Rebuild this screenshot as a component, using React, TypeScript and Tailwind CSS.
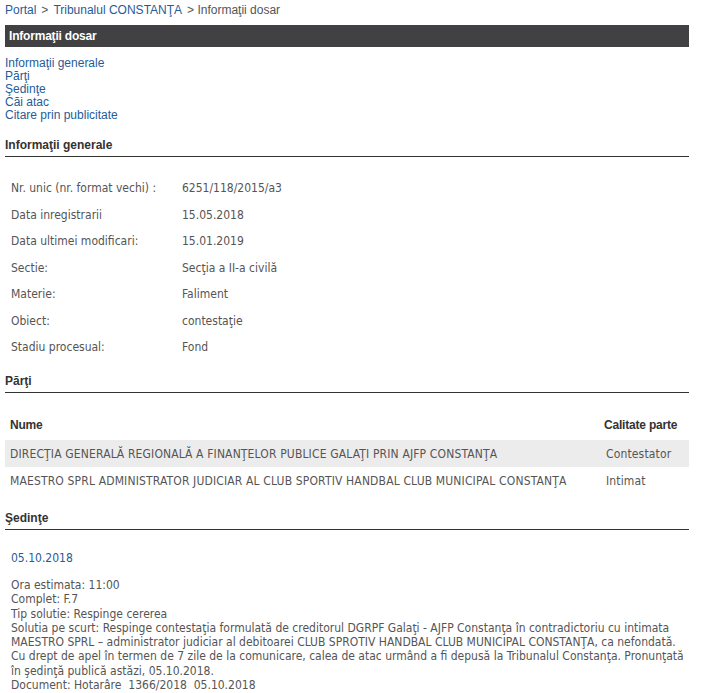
const sans = "font-['Liberation_Sans',Arial,sans-serif]";
const body = "font-['DejaVu_Sans_Condensed','DejaVu_Sans',sans-serif]";

const info: [string, string][] = [
  ["Nr. unic (nr. format vechi) :", "6251/118/2015/a3"],
  ["Data inregistrarii", "15.05.2018"],
  ["Data ultimei modificari:", "15.01.2019"],
  ["Sectie:", "Secţia a II-a civilă"],
  ["Materie:", "Faliment"],
  ["Obiect:", "contestaţie"],
  ["Stadiu procesual:", "Fond"],
];

const parti: [string, string][] = [
  ["DIRECŢIA GENERALĂ REGIONALĂ A FINANŢELOR PUBLICE GALAŢI PRIN AJFP CONSTANŢA", "Contestator"],
  ["MAESTRO SPRL ADMINISTRATOR JUDICIAR AL CLUB SPORTIV HANDBAL CLUB MUNICIPAL CONSTANŢA", "Intimat"],
];

function SectionTitle({ children }: { children: React.ReactNode }) {
  return (
    <div className={`${sans} text-[12px] font-bold text-[#333] leading-[14px] pb-[4px] border-b border-[#333]`}>
      {children}
    </div>
  );
}

export default function App() {
  return (
    <div className="bg-white w-[713px] h-[693px] overflow-hidden pl-[5px] pr-[24px] pt-[3px]">
      {/* breadcrumb */}
      <div className={`${sans} text-[12px] leading-[14px] text-[#555] flex gap-[5px]`}>
        <a className="text-[#1f5c99]">Portal</a>
        <span>&gt;</span>
        <a className="text-[#1f5c99]">Tribunalul CONSTANŢA</a>
        <span>&gt; Informaţii dosar</span>
      </div>

      <div className={`${sans} mt-[8px] h-[22px] bg-[#414042] text-white text-[12px] font-bold leading-[22px] px-[4px] tracking-[-0.2px]`}>
        Informaţii dosar
      </div>

      {/* anchors */}
      <div className={`${sans} mt-[10px] flex flex-col text-[12px] leading-[13px] text-[#1f5c99]`}>
        <a>Informaţii generale</a>
        <a>Părţi</a>
        <a>Şedinţe</a>
        <a>Căi atac</a>
        <a>Citare prin publicitate</a>
      </div>

      <div className="mt-[16px]">
        <SectionTitle>Informaţii generale</SectionTitle>
        <div className={`${body} mt-[24px] text-[12px] text-[#555] leading-[14px] flex flex-col gap-[12.5px] pl-[6px]`}>
          {info.map(([k, v]) => (
            <div key={k} className="flex">
              <span className="w-[171px]">{k}</span>
              <span>{v}</span>
            </div>
          ))}
        </div>
      </div>

      <div className="mt-[20px]">
        <SectionTitle>Părţi</SectionTitle>
        <div className={`${body} mt-[25px] text-[12px] leading-[14px] tracking-[0.15px]`}>
          <div className={`${sans} flex justify-between px-[5px] pb-[8px] text-[#333] font-bold tracking-[-0.2px]`}>
            <span>Nume</span>
            <span className="w-[80px] whitespace-nowrap">Calitate parte</span>
          </div>
          {parti.map(([n, c], i) => (
            <div key={n} className={`flex justify-between items-center h-[27px] px-[5px] text-[#555] ${i === 0 ? "bg-[#ececec]" : ""}`}>
              <span>{n}</span>
              <span className="w-[80px] pl-[2px]">{c}</span>
            </div>
          ))}
        </div>
      </div>

      <div className="mt-[17px]">
        <SectionTitle>Şedinţe</SectionTitle>
        <div className={`${body} mt-[21px] pl-[6px] text-[12px]`}>
          <div className="text-[#1f5c99] leading-[14px]">05.10.2018</div>
          <div className="mt-[13px] text-[#555] leading-[14.3px]">
            Ora estimata: 11:00<br />
            Complet: F.7<br />
            Tip solutie: Respinge cererea<br />
            Solutia pe scurt: Respinge contestaţia formulată de creditorul DGRPF Galaţi - AJFP Constanţa în contradictoriu cu intimata MAESTRO SPRL – administrator judiciar al debitoarei CLUB SPROTIV HANDBAL CLUB MUNICIPAL CONSTANŢA, ca nefondată. Cu drept de apel în termen de 7 zile de la comunicare, calea de atac urmând a fi depusă la Tribunalul Constanţa. Pronunţată în şedinţă publică astăzi, 05.10.2018.<br />
            Document: Hotarâre&nbsp; 1366/2018&nbsp; 05.10.2018
          </div>
        </div>
      </div>
    </div>
  );
}
